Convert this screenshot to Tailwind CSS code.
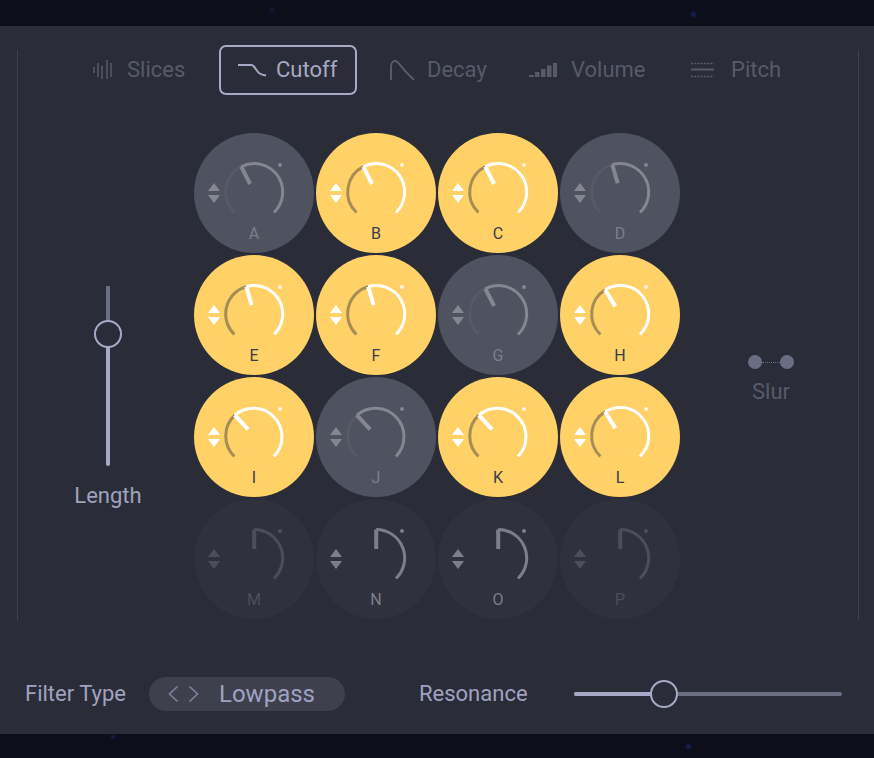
<!DOCTYPE html>
<html lang="en">
<head>
    <meta charset="UTF-8">
    <title>Filter Sequencer</title>
    <script src="https://cdn.jsdelivr.net/npm/@tailwindcss/browser@4"></script>
</head>
<body class="relative w-[874px] h-[758px] overflow-hidden bg-[#0d0e1a] font-[Roboto,sans-serif]">
    <!-- stars behind the panel -->
    <div class="absolute left-[270px] top-[8px] w-[4px] h-[4px] rounded-full bg-[#1a1f47] blur-[1px]"></div>
    <div class="absolute left-[691px] top-[12px] w-[5px] h-[5px] rounded-full bg-[#1b2558] blur-[1px]"></div>
    <div class="absolute left-[111px] top-[735px] w-[4px] h-[4px] rounded-full bg-[#1a1f47] blur-[1px]"></div>
    <div class="absolute left-[686px] top-[744px] w-[5px] h-[5px] rounded-full bg-[#1b2558] blur-[1px]"></div>

    <div class="absolute left-0 top-[26px] w-[874px] h-[708px] bg-[#2a2c37] flow-root">
        <div class="flow-root ml-[17px] mt-[24px] w-[842px] h-[570px] border-x border-[#3f414d]">
            <!-- tabs -->
            <div class="relative -mt-[5px] h-[50px] text-[22px] text-[#585a68]">
                <div class="absolute left-[75px] top-0 h-full flex items-center gap-[14px]">
                    <svg width="20" height="22" viewBox="0 0 20 22" fill="none" stroke="#585a68" stroke-width="1.5">
                        <path d="M1 8v6M5 4v14M9 7v13M14 1v19M18 4v14"/>
                    </svg>
                    <span class="-mt-[2px]">Slices</span>
                </div>
                <div class="absolute left-[201px] top-0 w-[138px] h-[50px] flex items-center pl-[17px] gap-[8px] rounded-[7px] border-2 border-[#a8a9c6] text-[#a8a9c6]">
                    <svg width="30" height="14" viewBox="0 0 30 14" fill="none" stroke="#a8a9c6" stroke-width="2">
                        <path d="M0 2h13c2 0 3 1 4 3l3 4c1 1.5 3 2.5 8 3.5"/>
                    </svg>
                    <span class="-mt-[2px]">Cutoff</span>
                </div>
                <div class="absolute left-[371px] top-0 h-full flex items-center gap-[12px]">
                    <svg width="26" height="22" viewBox="0 0 26 22" fill="none" stroke="#585a68" stroke-width="2">
                        <path d="M2 21V8c0-4 2-6 4-6 2 0 3 1 5 4l6 7c2 2 4 4 8 8"/>
                    </svg>
                    <span class="-mt-[2px]">Decay</span>
                </div>
                <div class="absolute left-[511px] top-0 h-full flex items-center gap-[14px]">
                    <svg width="28" height="14" viewBox="0 0 28 14" fill="#585a68">
                        <rect x="0" y="12" width="5" height="2"/>
                        <rect x="6" y="9" width="4.5" height="5"/>
                        <rect x="12" y="6" width="4.5" height="8"/>
                        <rect x="18" y="2.5" width="4.5" height="11.5"/>
                        <rect x="24" y="0" width="4" height="14"/>
                    </svg>
                    <span class="-mt-[2px]">Volume</span>
                </div>
                <div class="absolute left-[673px] top-0 h-full flex items-center gap-[17px]">
                    <svg width="23" height="16" viewBox="0 0 23 16" fill="none" stroke="#585a68">
                        <path d="M0 1.5h23M0 14.5h23" stroke-width="1.5" stroke-dasharray="2 1.2"/>
                        <path d="M0 7.5h23" stroke-width="2"/>
                    </svg>
                    <span class="-mt-[2px]">Pitch</span>
                </div>
            </div>

            <!-- main area -->
            <div class="flex mt-[38px]">
                <div class="w-[176px] flex flex-col items-center pt-[153px] pl-[4px]">
                    <div class="relative w-[4px] h-[180px] rounded-full bg-[#a8a9c6]">
                        <div class="w-[4px] h-[48px] rounded-t-full bg-[#6b6d80]"></div>
                        <div class="absolute left-[-12px] top-[34px] w-[28px] h-[28px] rounded-full border-2 border-[#a8a9c6] bg-[#2a2c37]"></div>
                    </div>
                    <span class="mt-[17px] text-[22px] leading-[26px] text-[#a0a2bf]">Length</span>
                </div>

                <div id="pads" class="grid grid-cols-[repeat(4,120px)] auto-rows-[120px] gap-[2px]"></div>

                <div class="flex-1 flex flex-col items-center pt-[222px] pl-[4px]">
                    <div class="flex items-center">
                        <div class="w-[14px] h-[14px] rounded-full bg-[#6b6d80]"></div>
                        <div class="w-[18px] border-t border-dotted border-[#6b6d80]"></div>
                        <div class="w-[14px] h-[14px] rounded-full bg-[#6b6d80]"></div>
                    </div>
                    <span class="mt-[10px] text-[22px] leading-[26px] text-[#585a68]">Slur</span>
                </div>
            </div>
        </div>

        <!-- bottom controls -->
        <div class="flex items-center mt-[57px] h-[34px] text-[22px] text-[#a0a2bf]">
            <span class="ml-[25px] -mt-[2px]">Filter Type</span>
            <div class="ml-[23px] w-[196px] h-[34px] rounded-full bg-[#3e404c] flex items-center pl-[18px]">
                <svg width="32" height="18" viewBox="0 0 32 18" fill="none" stroke="#80829a" stroke-width="1.6">
                    <path d="M10.5 1.5 2.5 9l8 7.5M22.5 1.5l8 7.5-8 7.5"/>
                </svg>
                <span class="ml-[20px] text-[24px] text-[#a0a2c4]">Lowpass</span>
            </div>
            <span class="ml-[74px] -mt-[2px]">Resonance</span>
            <div class="relative ml-[46px] w-[268px] h-[4px] rounded-full bg-[#6b6d80]">
                <div class="w-[90px] h-[4px] rounded-l-full bg-[#a8a9c6]"></div>
                <div class="absolute left-[76px] top-[-12px] w-[28px] h-[28px] rounded-full border-2 border-[#a8a9c6] bg-[#2a2c37]"></div>
            </div>
        </div>
    </div>

    <script>
        // angle of each knob in degrees, 0 is straight up
        const pads = [
            { name: "A", angle: -27, kind: "off" },
            { name: "B", angle: -27, kind: "on" },
            { name: "C", angle: -27, kind: "on" },
            { name: "D", angle: -16, kind: "off" },
            { name: "E", angle: -16, kind: "on" },
            { name: "F", angle: -16, kind: "on" },
            { name: "G", angle: -27, kind: "off" },
            { name: "H", angle: -32, kind: "on" },
            { name: "I", angle: -43, kind: "on" },
            { name: "J", angle: -43, kind: "off" },
            { name: "K", angle: -43, kind: "on" },
            { name: "L", angle: -32, kind: "on" },
            { name: "M", angle: 0, kind: "faint" },
            { name: "N", angle: 0, kind: "mute" },
            { name: "O", angle: 0, kind: "mute" },
            { name: "P", angle: 0, kind: "faint" }
        ];

        const looks = {
            on: { pad: "bg-[#ffd166]", text: "text-[#3a3d4c]", bright: "#ffffff", dim: "#a68d55", dot: "#fff5dc", arrow: "#ffffff" },
            off: { pad: "bg-[#4f525f]", text: "text-[#7d7f8b]", bright: "#85868f", dim: "#575965", dot: "#85868f", arrow: "#85868f" },
            mute: { pad: "bg-[#2f313c]", text: "text-[#7d7f88]", bright: "#7d7f88", dim: "#2f313c", dot: "#7d7f88", arrow: "#7d7f88" },
            faint: { pad: "bg-[#2f313c]", text: "text-[#4c4e5a]", bright: "#4c4e5a", dim: "#2f313c", dot: "#4c4e5a", arrow: "#4c4e5a" }
        };

        const point = (deg, r) => {
            const rad = deg * Math.PI / 180;
            return (60.2 + r * Math.sin(rad)).toFixed(1) + " " + (59 - r * Math.cos(rad)).toFixed(1);
        };

        document.getElementById("pads").innerHTML = pads.map(p => {
            const look = looks[p.kind];
            return `<div class="relative rounded-full flex justify-center items-end pb-[9px] ${look.pad}">
                <svg class="absolute left-0 top-0" width="120" height="120" viewBox="0 0 120 120" fill="none" stroke-width="3">
                    <path d="M${point(-136, 28.5)} A28.5 28.5 0 0 1 ${point(p.angle, 28.5)}" stroke="${look.dim}"/>
                    <path d="M${point(p.angle, 28.5)} A28.5 28.5 0 0 1 ${point(136, 28.5)}" stroke="${look.bright}"/>
                    <path d="M${point(p.angle, 28.5)} L${point(p.angle, 9)}" stroke="${look.bright}" stroke-width="4"/>
                    <circle cx="86" cy="32" r="2" fill="${look.dot}"/>
                    <path d="M20 50l6 8H14zM14 62h12l-6 8z" fill="${look.arrow}"/>
                </svg>
                <span class="text-[16px] leading-[20px] ${look.text}">${p.name}</span>
            </div>`;
        }).join("");
    </script>
</body>
</html>
